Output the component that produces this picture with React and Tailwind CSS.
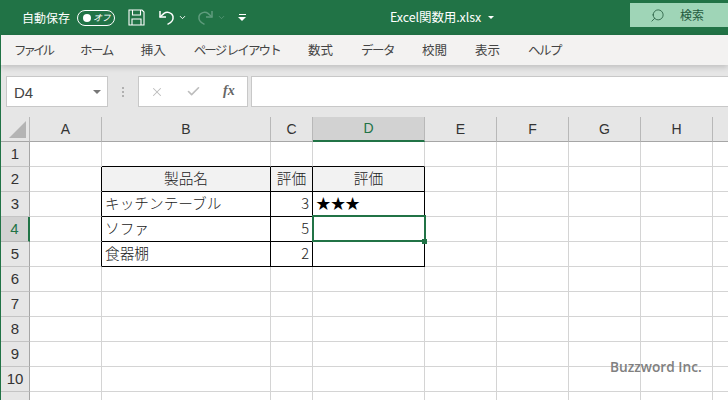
import React from 'react';
import { ChevronDown, Search, Check, X } from 'lucide-react';

const ui = 'font-["Noto_Sans_CJK_JP","Noto_Sans",sans-serif]';
const cjk = 'font-["Noto_Sans_CJK_JP",sans-serif]';

// kana tabs are squeezed, the original UI font is narrower there
const tabs = [
	{ text: 'ファイル', cls: 'tracking-[-3px]' },
	{ text: 'ホーム', cls: 'tracking-[-1.5px]' },
	{ text: '挿入', cls: '' },
	{ text: 'ページ レイアウト', cls: 'tracking-[-1.8px]' },
	{ text: '数式', cls: '' },
	{ text: 'データ', cls: 'tracking-[-1.5px]' },
	{ text: '校閲', cls: '' },
	{ text: '表示', cls: '' },
	{ text: 'ヘルプ', cls: 'tracking-[-1.5px]' },
];
const cols = ['A', 'B', 'C', 'D', 'E', 'F', 'G', 'H', 'I'];
const rows = [1, 2, 3, 4, 5, 6, 7, 8, 9, 10, 11];

// table contents, keyed by cell name
const cells = {
	B2: { text: '製品名', align: 'center' },
	C2: { text: '評価', align: 'center' },
	D2: { text: '評価', align: 'center' },
	B3: { text: 'キッチンテーブル' },
	C3: { text: '3', align: 'right' },
	D3: { text: '★★★' },
	B4: { text: 'ソファ' },
	C4: { text: '5', align: 'right' },
	B5: { text: '食器棚' },
	C5: { text: '2', align: 'right' },
};

function inTable(c, r) {
	return ['B', 'C', 'D'].includes(c) && r >= 2 && r <= 5;
}

function Cell({ col, row }) {
	const idx = cols.indexOf(col);
	const blackRight = inTable(col, row) || inTable(cols[idx + 1], row);
	const blackBottom = inTable(col, row) || inTable(col, row + 1);
	const cell = cells[col + row];
	const selected = col === 'D' && row === 4;
	return (
		<div
			className={`relative flex items-center border-r border-b px-[3px] pb-[2px] text-[14.67px] leading-none font-light whitespace-nowrap ${cjk} ${
				col === 'D' && row === 3 ? 'text-black' : 'text-[#222]'
			} ${blackRight ? 'border-r-black' : 'border-r-[#d4d4d4]'} ${blackBottom ? 'border-b-black' : 'border-b-[#d4d4d4]'} ${
				row === 2 && inTable(col, row) ? 'bg-[#f2f2f2]' : 'bg-white'
			} ${cell?.align === 'center' ? 'justify-center' : cell?.align === 'right' ? 'justify-end' : 'justify-start'}`}
		>
			{cell?.text}
			{selected && (
				<div className="absolute left-[-1px] top-[-2px] right-[-2px] bottom-[-1px] z-10 border-2 border-[#217346]">
					<div className="absolute right-[-3px] bottom-[-4px] size-[5px] bg-[#217346]" />
				</div>
			)}
		</div>
	);
}

function SaveIcon() {
	return (
		<svg width="17" height="17" viewBox="0 0 17 17" fill="none" stroke="white" strokeWidth="1.1">
			<path d="M1 1h13l2 2v13H1z" />
			<path d="M4.500 1v5h8V1M4 16v-6h9v6" />
		</svg>
	);
}

function UndoIcon({ flip, color }) {
	return (
		<svg width="17" height="17" viewBox="0 0 17 17" fill="none" stroke={color} strokeWidth="1.5" className={flip ? '-scale-x-100' : ''}>
			<path d="M2 2v6h6" />
			<path d="M2 8l4-3.600c3-2 8-1 9 3 .6 3.600-2 6.500-5.500 8" />
		</svg>
	);
}

export default function App() {
	return (
		<div className={`w-[728px] h-[400px] overflow-hidden relative flex flex-col bg-[#e6e6e6] ${ui}`}>
			{/* title bar */}
			<div className="h-[35px] shrink-0 bg-[#217346] flex items-center text-white">
				<span className="ml-[22px] text-[12px]">自動保存</span>
				<div className="ml-[7px] w-[38px] h-[16px] rounded-full border border-white flex items-center justify-between pl-[5px] pr-[4px]">
					<span className="size-[8px] rounded-full bg-white" />
					<span className="text-[9px] tracking-[-0.5px] italic leading-none">オフ</span>
				</div>
				<div className="ml-[13px]">
					<SaveIcon />
				</div>
				<div className="ml-[13px]">
					<UndoIcon color="white" />
				</div>
				<ChevronDown size={9} strokeWidth={2.5} className="ml-[3px]" />
				<div className="ml-[10px]">
					<UndoIcon flip color="#5f9c7d" />
				</div>
				<ChevronDown size={9} strokeWidth={2} className="ml-[3px] text-[#5f9c7d]" />
				<div className="ml-[12px] flex flex-col items-center gap-[2px]">
					<span className="w-[7px] h-[1px] bg-white" />
					<span className="w-0 h-0 border-x-[4px] border-x-transparent border-t-[4px] border-t-white" />
				</div>
				<span className="ml-[144px] text-[12.500px] tracking-[-0.1px] whitespace-nowrap">Excel関数用.xlsx</span>
				<span className="ml-[7px] w-0 h-0 border-x-[3px] border-x-transparent border-t-[3px] border-t-white" />
				<div className="ml-auto w-[98px] h-[24px] mt-[-5px] bg-[#9fd5b7] flex items-center text-[#245a3e]">
					<Search size={15} strokeWidth={1.3} className="ml-[20px] -scale-x-100" />
					<span className="ml-[15px] text-[12px]">検索</span>
				</div>
			</div>

			{/* ribbon tabs */}
			<div className="relative z-10 h-[30px] shrink-0 bg-[#f3f2f1] shadow-[0_2px_6px_rgba(0,0,0,0.18)] flex items-center pl-[13px] gap-[28px] text-[12.500px] text-[#444] border-l border-[#217346]">
				{tabs.map((t) => (
					<span key={t.text} className={`whitespace-nowrap ${t.cls}`}>
						{t.text}
					</span>
				))}
			</div>

			{/* formula bar */}
			<div className="h-[52px] shrink-0 flex items-start pt-[11px] border-l border-[#217346]">
				<div className="ml-[5px] w-[102px] h-[31px] bg-white border border-[#c8c8c8] flex items-center justify-between pl-[7px] pr-[6px]">
					<span className="pt-[3px] text-[15px] text-[#444] font-['Liberation_Sans',sans-serif]">D4</span>
					<span className="w-0 h-0 border-x-[4px] border-x-transparent border-t-[4px] border-t-[#777]" />
				</div>
				<div className="ml-[14px] h-[31px] flex flex-col justify-center gap-[2px]">
					<span className="size-[2px] bg-[#b0b0b0]" />
					<span className="size-[2px] bg-[#b0b0b0]" />
					<span className="size-[2px] bg-[#b0b0b0]" />
				</div>
				<div className="ml-[14px] w-[110px] h-[31px] bg-white border border-[#c8c8c8] flex items-center text-[#bdbdbd]">
					<X size={14} strokeWidth={1.8} className="ml-[11px]" />
					<Check size={15} strokeWidth={2.600} className="ml-[22px]" />
					<span className="ml-[22px] pb-[2px] text-[14px] italic font-bold text-[#666] font-['Liberation_Serif',serif]">fx</span>
				</div>
				<div className="ml-[3px] flex-1 h-[31px] bg-white border border-[#c8c8c8] border-r-0" />
			</div>

			{/* sheet */}
			<div className="flex-1 min-h-0 border-l border-[#217346] bg-white grid grid-cols-[29px_72px_169px_42px_112px_72px_72px_72px_72px_72px] grid-rows-[25px] auto-rows-[25px] font-['Liberation_Sans',sans-serif]">
				<div className="bg-[#e6e6e6] border-r border-b border-r-[#b8b8b8] border-b-[#a6a6a6] flex items-end justify-end pr-[3px] pb-[3px]">
					<svg width="17" height="17" viewBox="0 0 17 17">
						<path d="M17 0v17H0z" fill="#b4b4b4" />
					</svg>
				</div>
				{cols.map((c) => (
					<div
						key={c}
						className={`flex items-center justify-center text-[14px] border-r border-r-[#b8b8b8] ${
							c === 'D' ? 'bg-[#d2d2d2] text-[#217346] border-b-2 border-b-[#217346]' : 'bg-[#e6e6e6] text-[#333] border-b border-b-[#a6a6a6]'
						}`}
					>
						{/* column I and row 11 have their labels past the window edge */}
						{c !== 'I' && c}
					</div>
				))}
				{rows.map((r) => (
					<React.Fragment key={r}>
						<div
							className={`flex items-center justify-center pb-[1px] text-[15px] leading-none border-b ${
								r === 4
									? 'bg-[#d2d2d2] text-[#217346] border-r-2 border-r-[#217346] border-b-[#b8b8b8]'
									: 'bg-[#e6e6e6] text-[#333] border-r border-r-[#a6a6a6] border-b-[#c4c4c4]'
							}`}
						>
							{r !== 11 && r}
						</div>
						{cols.map((c) => (
							<Cell key={c} col={c} row={r} />
						))}
					</React.Fragment>
				))}
			</div>

			{/* watermark */}
			<span className="absolute z-20 left-[610px] top-[357px] text-[13.700px] font-semibold text-[#808080] font-['Open_Sans',sans-serif] whitespace-nowrap">
				Buzzword Inc.
			</span>
		</div>
	);
}
